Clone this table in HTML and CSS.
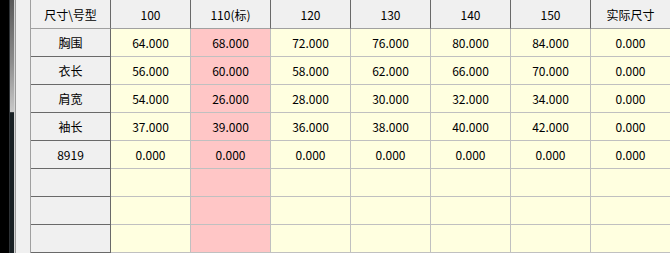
FILE: index.html
```html
<!DOCTYPE html>
<html lang="zh-CN">
<head>
<meta charset="utf-8">
<title>尺寸表</title>
<link rel="stylesheet" href="styles.css">
</head>
<body>
<div class="frame">
  <div class="edge"></div>
  <div class="rail"><div class="thumb"></div><div class="track"></div></div>
  <div class="hi"></div>
  <div class="lo"></div>
  <div class="pad"></div>
  <div class="grid">
    <div class="cell head corner">尺寸\号型</div>
    <div class="cell head">100</div>
    <div class="cell head">110(标)</div>
    <div class="cell head">120</div>
    <div class="cell head">130</div>
    <div class="cell head">140</div>
    <div class="cell head">150</div>
    <div class="cell head">实际尺寸</div>

    <div class="cell rowh">胸围</div>
    <div class="cell data">64.000</div>
    <div class="cell data std">68.000</div>
    <div class="cell data">72.000</div>
    <div class="cell data">76.000</div>
    <div class="cell data">80.000</div>
    <div class="cell data">84.000</div>
    <div class="cell data">0.000</div>

    <div class="cell rowh">衣长</div>
    <div class="cell data">56.000</div>
    <div class="cell data std">60.000</div>
    <div class="cell data">58.000</div>
    <div class="cell data">62.000</div>
    <div class="cell data">66.000</div>
    <div class="cell data">70.000</div>
    <div class="cell data">0.000</div>

    <div class="cell rowh">肩宽</div>
    <div class="cell data">54.000</div>
    <div class="cell data std">26.000</div>
    <div class="cell data">28.000</div>
    <div class="cell data">30.000</div>
    <div class="cell data">32.000</div>
    <div class="cell data">34.000</div>
    <div class="cell data">0.000</div>

    <div class="cell rowh">袖长</div>
    <div class="cell data">37.000</div>
    <div class="cell data std">39.000</div>
    <div class="cell data">36.000</div>
    <div class="cell data">38.000</div>
    <div class="cell data">40.000</div>
    <div class="cell data">42.000</div>
    <div class="cell data">0.000</div>

    <div class="cell rowh">8919</div>
    <div class="cell data">0.000</div>
    <div class="cell data std">0.000</div>
    <div class="cell data">0.000</div>
    <div class="cell data">0.000</div>
    <div class="cell data">0.000</div>
    <div class="cell data">0.000</div>
    <div class="cell data">0.000</div>

    <div class="cell rowh"></div>
    <div class="cell data"></div>
    <div class="cell data std"></div>
    <div class="cell data"></div>
    <div class="cell data"></div>
    <div class="cell data"></div>
    <div class="cell data"></div>
    <div class="cell data"></div>

    <div class="cell rowh"></div>
    <div class="cell data"></div>
    <div class="cell data std"></div>
    <div class="cell data"></div>
    <div class="cell data"></div>
    <div class="cell data"></div>
    <div class="cell data"></div>
    <div class="cell data"></div>

    <div class="cell rowh"></div>
    <div class="cell data"></div>
    <div class="cell data std"></div>
    <div class="cell data"></div>
    <div class="cell data"></div>
    <div class="cell data"></div>
    <div class="cell data"></div>
    <div class="cell data"></div>
  </div>
</div>
</body>
</html>
```

FILE: styles.css
```css
html, body {
  margin: 0;
  padding: 0;
  background: #f0f0f0;
  overflow: hidden;
}

.frame {
  display: flex;
  width: 670px;
  height: 253px;
  overflow: hidden;
  font-family: "Noto Sans CJK SC", "Liberation Sans", sans-serif;
  font-size: 12px;
  color: #000;
}

.edge {
  flex: 0 0 9px;
  background: #000;
}

.rail {
  flex: 0 0 4px;
  display: flex;
  flex-direction: column;
  border-left: 1px solid #2e3236;
}

.thumb {
  flex: 0 0 112px;
  background: linear-gradient(#5a5a5a, #8c8c8c 55%, #c8c8c8);
  border-bottom: 1px solid #3a3f42;
}

.track {
  flex: 1;
  background: #182024;
}

.hi {
  flex: 0 0 1px;
  background: #d4d4d4;
}

.lo {
  flex: 0 0 1px;
  background: #9a9a9a;
}

.pad {
  flex: 0 0 14px;
  background: #f0f0f0;
}

.grid {
  flex: 0 0 auto;
  display: grid;
  grid-template-columns: repeat(8, 80px);
  grid-template-rows: 29px repeat(8, 28px);
  border-left: 1px solid #a0a0a0;
  align-self: flex-start;
}

.cell {
  box-sizing: border-box;
  display: flex;
  align-items: center;
  justify-content: center;
  white-space: nowrap;
  line-height: 1;
}

.head {
  background: #f0f0f0;
  border-right: 1px solid #696969;
  border-bottom: 1px solid #a0a0a0;
  padding-top: 1px;
}

.rowh {
  background: #f0f0f0;
  border-right: 1px solid #696969;
  border-bottom: 1px solid #696969;
}

.data {
  background: #ffffe0;
  border-right: 1px solid #c0c0c0;
  border-bottom: 1px solid #c0c0c0;
}

.data.std {
  background: #ffc6c6;
}
```
